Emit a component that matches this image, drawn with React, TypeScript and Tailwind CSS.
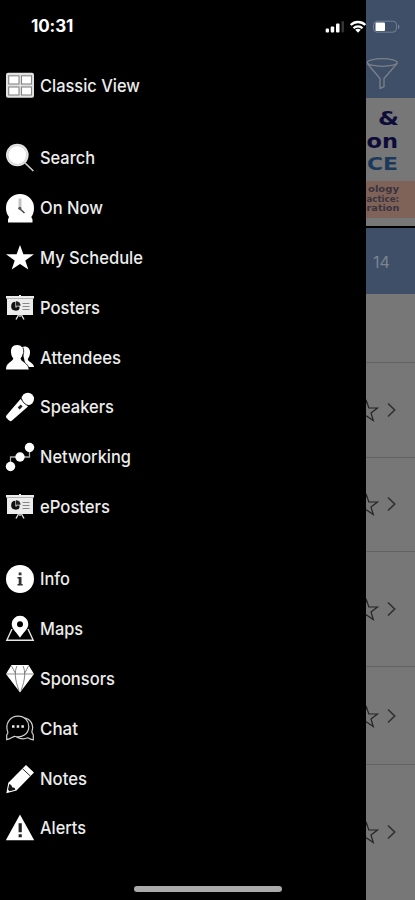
import type { ReactNode } from "react";

type MenuItem = { label: string; icon: ReactNode; width: string };

const PosterIcon = () => (
  <>
    <path d="M0 2h28v2.2H0zM1 4h26v17H1zM13 1h2v2h-2z" fill="#ececec" />
    <path d="M0 4.5h28" stroke="#999" strokeWidth="0.7" />
    <path d="M9.400 7.800a4.400 4.400 0 1 0 4.400 5.600h-4.400z" fill="#111" />
    <path d="M10 7.200v4.600h4.600a4.500 4.500 0 0 0-4.600-4.600z" fill="#222" />
    <path d="M10.300 12.600h3.200l-1.400 3.800z" fill="#111" />
    <path d="M16.500 9.500h7M16.500 12.500h7M16.500 15.500h7" stroke="#888" strokeWidth="1.2" />
    <path d="M12.500 21l-2.500 4.500M15.500 21l2.500 4.500M14 21v2" stroke="#ddd" strokeWidth="1.4" />
  </>
);

const sections: MenuItem[][] = [
  [
    {
      label: "Classic View",
      width: "w-[100px]",
      icon: (
        <>
          <rect x="0" y="0.7" width="28" height="25" rx="2" fill="#e2e2e2" />
          <g fill="#fff" stroke="#858585" strokeWidth="1.1">
            <rect x="2.7" y="3.8" width="10.3" height="8.2" />
            <rect x="15.5" y="3.8" width="10" height="8.2" />
            <rect x="2.7" y="15" width="10.3" height="8" />
            <rect x="15.5" y="15" width="10" height="8" />
          </g>
        </>
      ),
    },
  ],
  [
    {
      label: "Search",
      width: "w-[55px]",
      icon: (
        <>
          <circle cx="11.3" cy="11" r="11.3" fill="#e4e4e4" />
          <circle cx="11.3" cy="11" r="9.3" fill="#fff" stroke="#c4c4c4" strokeWidth="0.6" />
          <path d="M19 19l8.400 8" stroke="#ccc" strokeWidth="1.7" />
        </>
      ),
    },
    {
      label: "On Now",
      width: "w-[63px]",
      icon: (
        <>
          <path d="M14 0a14 14 0 0 1 14 14c0 4-1 6.600-2.700 9l1.200 2.500V28.500H2V25.500L3 23C1 20 0 18 0 14A14 14 0 0 1 14 0z" fill="#fff" />
          <path d="M14 4.500v9.500" stroke="#c4c4c4" strokeWidth="3" />
          <path d="M13 14l5.500 5" stroke="#444" strokeWidth="1.500" />
          <circle cx="13.800" cy="14.300" r="1.500" fill="#555" />
        </>
      ),
    },
    {
      label: "My Schedule",
      width: "w-[103px]",
      icon: (
        <path d="M14 1l3.400 9.300H28l-8.700 6.100 3 9.100-8.300-5.600-8.300 5.600 3-9.100L0 10.300h10.600z" fill="#fff" />
      ),
    },
    { label: "Posters", width: "w-[60px]", icon: <PosterIcon /> },
    {
      label: "Attendees",
      width: "w-[81px]",
      icon: (
        <>
          <path d="M15.500 3.500C20 1 24.500 4 24 9c-.2 3-1.200 4.500-2.200 6 0 3 6.200 3.800 6.200 8h-8z" fill="#fff" />
          <path d="M11 1c4.800 0 6.500 3.500 6 7.500-.3 3-1.300 4.500-2.300 5.800 0 4 7.800 3.700 8.300 11.200H0c0-7.500 7-7.300 7.300-11.200C6 13 5.300 11.500 5 8.500 4.700 4 6.500 1 11 1z" fill="#fff" />
          <path d="M17 3.500c1.500 5 .3 8-1.800 11 0 3.300 7 4 8 11" fill="none" stroke="#111" strokeWidth="0.9" />
        </>
      ),
    },
    {
      label: "Speakers",
      width: "w-[74px]",
      icon: (
        <>
          <circle cx="21.800" cy="6" r="6.200" fill="#fff" />
          <path d="M14.500 6l7.500 7.500L6 27.500c-1.200 1-2.200.8-3.500-.5L.8 25.200c-1-1-1-2-.2-3z" fill="#fff" />
          <path d="M15.500 5.500c.8 3.500 3.500 6.300 7.500 7.200" fill="none" stroke="#111" strokeWidth="0.900" />
          <path d="M11.700 14.500l3-3 1.900 1.900-3 3z" fill="#222" />
        </>
      ),
    },
    {
      label: "Networking",
      width: "w-[91px]",
      icon: (
        <>
          <path d="M4.500 23v-9h19V5" fill="none" stroke="#aaa" strokeWidth="1.300" />
          <g fill="#fff">
            <circle cx="4.500" cy="23.500" r="4.700" />
            <circle cx="14" cy="14" r="4.700" />
            <circle cx="23.500" cy="4.500" r="4.700" />
          </g>
        </>
      ),
    },
    { label: "ePosters", width: "w-[70px]", icon: <PosterIcon /> },
  ],
  [
    {
      label: "Info",
      width: "w-[30px]",
      icon: (
        <>
          <circle cx="14" cy="14" r="14" fill="#fff" />
          <path d="M12.700 7.500h2.800v2.800h-2.800zM11.500 12h4v7h1.200v1.500h-5.200V19h1.200v-5.500h-1.200z" fill="#333" />
        </>
      ),
    },
    {
      label: "Maps",
      width: "w-[43px]",
      icon: (
        <>
          <path d="M6 14L.8 25.300h26.400L22 14" fill="none" stroke="#e5e5e5" strokeWidth="1.400" />
          <path d="M14 .8a8.300 8.300 0 0 1 8.300 8.300C22.300 14.300 17 17.800 14 22.800 11 17.800 5.700 14.300 5.700 9.100A8.300 8.300 0 0 1 14 .8z" fill="#fff" />
          <circle cx="14" cy="9.200" r="3" fill="#000" />
        </>
      ),
    },
    {
      label: "Sponsors",
      width: "w-[75px]",
      icon: (
        <>
          <path d="M5.500 0h17L28 9 14 27.500 0 9z" fill="#fff" />
          <path d="M0 9h28" stroke="#777" strokeWidth="0.800" />
          <path d="M11 1C8.500 6 8.500 14 13 25.500M17 1c2.500 5 2.500 13-2 24.500M5.500 1l4 7.500M22.500 1l-4 7.500" fill="none" stroke="#666" strokeWidth="0.800" />
        </>
      ),
    },
    {
      label: "Chat",
      width: "w-[38px]",
      icon: (
        <g fill="none" stroke="#d0d0d0" strokeWidth="1.200">
          <path d="M.7 24.700V20c1-1 1.500-1.500 1.100-3C-1.500 8.500 4.500 1.200 12 1.200c7 0 10.800 5 10.800 10.300 0 7.500-7 12-14.300 9.800-2.500.7-3.500 2.600-7.800 3.400z" />
          <path d="M18.500 2.800c6 1.200 9.700 7 7.400 13.700-.3 1.600 1.400 2.200 1.400 3.700v4.600c-3-.5-4-1.500-5.500-2-3.500 1.500-7 1.500-11.300-.8" />
          <path d="M6 11.500h2.500M10.700 11.500h2.500M15.400 11.500h2.500" stroke="#eee" strokeWidth="2.400" />
        </g>
      ),
    },
    {
      label: "Notes",
      width: "w-[47px]",
      icon: (
        <>
          <path d="M20 0l8 7.500L10.500 25.500.3 28.300l2-10.500z" fill="#fff" />
          <path d="M16.500 3.700l8 7.500" stroke="#111" strokeWidth="0.900" />
          <path d="M3.200 19l2 1 1 2.200 2.600.8.400 1.800-5.500 1.500-1.700-1.500z" fill="#161616" />
        </>
      ),
    },
    {
      label: "Alerts",
      width: "w-[46px]",
      icon: (
        <>
          <path d="M14 .5L28.200 26.200H-.2z" fill="#fff" />
          <path d="M12.600 9.200h3.200v9h-3.200zM12.600 20.200h3.200v3h-3.200z" fill="#222" />
        </>
      ),
    },
  ],
];

const MenuRow = ({ label, icon, width }: MenuItem) => (
  <li className="flex h-[49.875px] items-center gap-[5.5px] pl-[6px]">
    <svg className="h-7 w-7 shrink-0 overflow-visible" viewBox="0 0 28 28">
      {icon}
    </svg>
    <svg className={`h-6 shrink-0 overflow-visible ${width}`}>
      <text x="0" y="18.3" textLength="100%" lengthAdjust="spacingAndGlyphs" fill="#ececec" fontSize="17.5" fontWeight="500">
        {label}
      </text>
    </svg>
  </li>
);

const sessionRows = [
  { height: "h-[95px]", offset: "pt-[34px]" },
  { height: "h-[94px]", offset: "pt-[33px]" },
  { height: "h-[115px]", offset: "pt-[44px]" },
  { height: "h-[98px]", offset: "pt-[36px]" },
  { height: "h-[136px]", offset: "pt-[54px]" },
];

const SessionRow = ({ height, offset }: { height: string; offset: string }) => (
  <div className={`${height} ${offset} border-t border-[#626262]`}>
    <svg className="h-7 w-[49px]" viewBox="0 0 49 28" fill="none">
      <path d="M-9 11h7L.5 4l2.300 7H11.500L5 16l2.300 7.500L.5 19-6 23.500-3.500 16z" stroke="#252525" strokeWidth="1.200" />
      <path d="M22 6.500l6.700 6.500-6.700 6.500" stroke="#303030" strokeWidth="1.600" />
    </svg>
  </div>
);

const StatusBar = () => (
  <div className="absolute inset-x-0 top-0 flex h-[53px] items-center pr-[15px] pl-[31px] text-white">
    <span className="text-[17px] font-bold tracking-[-0.1px]">10:31</span>
    <svg className="ml-auto h-4 w-[76px]" viewBox="0 0 76 16">
      <g fill="#fff">
        <rect x="1.700" y="9.500" width="3.300" height="4" rx="1" />
        <rect x="6.700" y="7.500" width="3.500" height="6" rx="1" />
        <rect x="12" y="4.500" width="3.500" height="9" rx="1" />
        <rect x="17.500" y="2" width="2.500" height="11.500" rx="1" fill="#333" />
      </g>
      <g fill="none" stroke="#fff" strokeWidth="2.300">
        <path d="M26.700 6c4-4 10.500-4 14.600 0M29.500 9.200c2.500-2.500 6.500-2.500 9 0" />
      </g>
      <path d="M31.200 10.800c1.800-1.500 3.800-1.500 5.600 0L34 13.800z" fill="#fff" />
      <rect x="49.500" y="2.200" width="23" height="11" rx="3.500" fill="none" stroke="#718096" />
      <path d="M74 5.500v4.500c2-.7 2-3.800 0-4.500z" fill="#718096" />
      <rect x="51.500" y="3.500" width="9.500" height="8.500" rx="1" fill="#fff" />
    </svg>
  </div>
);

export default function App() {
  return (
    <div className="relative flex h-[900px] w-[415px] overflow-hidden bg-black font-['Inter','Liberation_Sans',sans-serif]">
      <nav className="w-[366px] shrink-0 bg-black pt-[61.2px]">
        {sections.map((items, i) => (
          <ul key={i} className="mb-[22px]">
            {items.map((item) => (
              <MenuRow key={item.label} {...item} />
            ))}
          </ul>
        ))}
      </nav>

      <main className="w-[49px] shrink-0 overflow-hidden bg-[#777777]">
        <header className="h-[98px] bg-[#3f4f68] pt-[57px]">
          <svg className="h-8 w-8" viewBox="0 0 32 32" fill="none" stroke="#7c8189" strokeWidth="1.300">
            <ellipse cx="16.300" cy="5.500" rx="15" ry="3.800" />
            <path d="M1.300 6.500L14 21.500v10.200l4-2V21.500L31 6.500" />
          </svg>
        </header>
        <div className="flex h-[128px] flex-col items-end bg-[#777777]">
          <svg className="h-[83px] w-[49px] font-['DejaVu_Sans','Verdana',sans-serif] font-bold" fill="#0d0b38">
            <text x="12" y="26.500" fontSize="20" textLength="21" lengthAdjust="spacingAndGlyphs">&amp;</text>
            <text x="0.500" y="50" fontSize="19" textLength="31.500" lengthAdjust="spacingAndGlyphs">on</text>
            <text x="1" y="72" fontSize="18" textLength="31" lengthAdjust="spacingAndGlyphs" fill="#1b3a5b">CE</text>
          </svg>
          <svg className="h-[37px] w-[49px] bg-[#7f6358] font-['DejaVu_Sans','Verdana',sans-serif] font-bold" fill="#3a3340">
            <text x="2" y="11" fontSize="8.500" textLength="31" lengthAdjust="spacingAndGlyphs">ology</text>
            <text x="0.500" y="20.500" fontSize="8.500" textLength="32.500" lengthAdjust="spacingAndGlyphs">actice:</text>
            <text x="0.500" y="30" fontSize="8.500" textLength="33" lengthAdjust="spacingAndGlyphs">ration</text>
          </svg>
        </div>
        <div className="flex h-[68px] items-center border-t-2 border-black bg-[#3f4f68] pt-[2px] pl-[7px] text-[16px] text-[#7b8490]">
          14
        </div>
        <div className="h-[68px]" />
        {sessionRows.map((row, i) => (
          <SessionRow key={i} {...row} />
        ))}
      </main>

      <StatusBar />
      <div className="absolute bottom-[8px] left-[134px] h-[6px] w-[148px] rounded-full bg-[#aaaaaa]" />
    </div>
  );
}
